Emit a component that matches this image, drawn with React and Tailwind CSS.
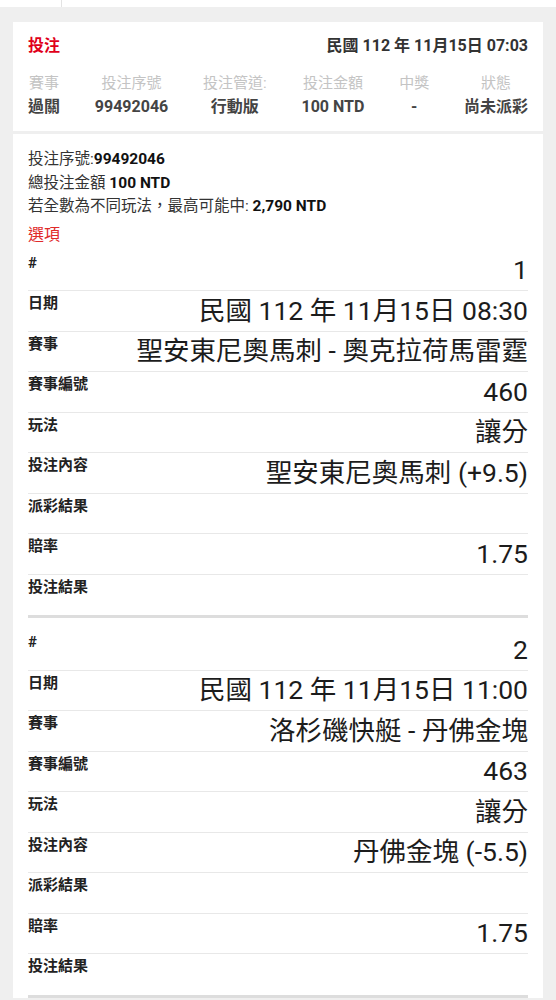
import React from 'react';

const font = { fontFamily: 'Roboto, "Noto Sans CJK TC", sans-serif' };

const summary = [
  { label: '賽事', value: '過關' },
  { label: '投注序號', value: '99492046' },
  { label: '投注管道:', value: '行動版' },
  { label: '投注金額', value: '100 NTD' },
  { label: '中獎', value: '-' },
  { label: '狀態', value: '尚未派彩' },
];

const selections = [
  {
    no: '1',
    date: '民國 112 年 11月15日 08:30',
    match: '聖安東尼奧馬刺 - 奧克拉荷馬雷霆',
    matchNo: '460',
    type: '讓分',
    pick: '聖安東尼奧馬刺 (+9.5)',
    odds: '1.75',
  },
  {
    no: '2',
    date: '民國 112 年 11月15日 11:00',
    match: '洛杉磯快艇 - 丹佛金塊',
    matchNo: '463',
    type: '讓分',
    pick: '丹佛金塊 (-5.5)',
    odds: '1.75',
  },
];

const Row = ({ label, value, last }) => (
  <div
    className={
      'h-[40.5px] flex justify-between items-center ' +
      (last ? '' : 'border-b border-[#e8e8e8]')
    }
  >
    <span className="self-start mt-[3px] text-[15px] leading-[18px] font-bold text-[#222]">
      {label}
    </span>
    <span className="text-[26.5px] leading-[32px] text-[#1c1c1c] whitespace-nowrap">{value}</span>
  </div>
);

const Selection = ({ item, first }) => (
  <div className={(first ? 'pt-[4px]' : 'pt-[12px]') + ' border-b-[3px] border-[#dddddd]'}>
    <Row label="#" value={item.no} />
    <Row label="日期" value={item.date} />
    <Row label="賽事" value={item.match} />
    <Row label="賽事編號" value={item.matchNo} />
    <Row label="玩法" value={item.type} />
    <Row label="投注內容" value={item.pick} />
    <Row label="派彩結果" value="" />
    <Row label="賠率" value={item.odds} />
    <Row label="投注結果" value="" last />
  </div>
);

export default function App() {
  return (
    <div className="min-h-screen bg-[#efefef] overflow-hidden" style={font}>
      <div className="h-[7px] bg-white flex">
        <div className="w-[62px] border-r border-[#e3e3e3]"></div>
      </div>

      <div className="bg-white mx-[13px] mt-[15px] px-[15px] pt-3 pb-[13px]">
        <div className="flex justify-between items-center h-6">
          <span className="text-[16px] font-bold text-[#e0001a]">投注</span>
          <span className="text-[16px] font-bold text-[#333]">民國 112 年 11月15日 07:03</span>
        </div>
        <div className="mt-[14px] flex justify-between">
          {summary.map((s) => (
            <div key={s.label} className="flex flex-col items-center">
              <span className="text-[15px] leading-[22px] text-[#c4c4c4]">{s.label}</span>
              <span className="mt-[2px] text-[16px] leading-[22px] font-bold text-[#444]">
                {s.value}
              </span>
            </div>
          ))}
        </div>
      </div>

      <div className="bg-white mx-[13px] mt-[3px] px-[15px] pt-[14px]">
        <div className="text-[15.5px] leading-[23.5px] text-[#333]">
          <div>
            投注序號:<span className="font-bold text-[#111]">99492046</span>
          </div>
          <div>
            總投注金額 <span className="font-bold text-[#111]">100 NTD</span>
          </div>
          <div>
            若全數為不同玩法，最高可能中: <span className="font-bold text-[#111]">2,790 NTD</span>
          </div>
        </div>
        <div className="mt-[4px] text-[16px] leading-6 text-[#e02a2a]">選項</div>
        {selections.map((item, i) => (
          <Selection key={item.no} item={item} first={i === 0} />
        ))}
      </div>
    </div>
  );
}
